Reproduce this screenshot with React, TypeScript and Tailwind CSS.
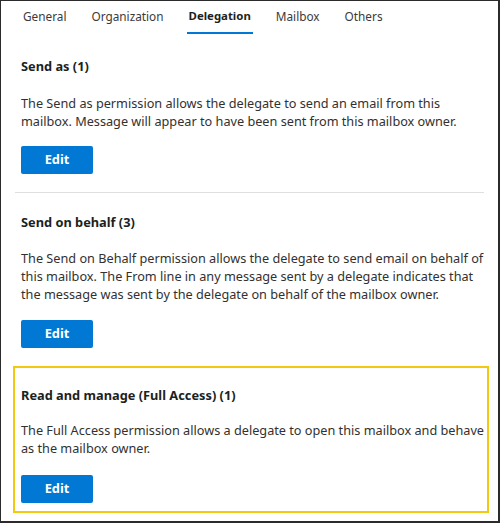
const tabs = ['General', 'Organization', 'Delegation', 'Mailbox', 'Others'];

function EditButton({ className = 'mt-[16px]' }: { className?: string }) {
  return (
    <button
      className={`${className} flex h-[28px] w-[72px] items-center justify-center rounded-[2px] bg-[#0078d4] text-[12.8px] font-bold text-white`}
    >
      Edit
    </button>
  );
}

export default function App() {
  return (
    <div
      className="h-[523px] w-[500px] overflow-hidden border-t border-l border-r-2 border-b-2 border-[#2b2b2b] bg-white text-[#323130]"
      style={{ fontFamily: '"Noto Sans", "Open Sans", sans-serif' }}
    >
      {/* Tabs */}
      <div className="flex h-[33px] gap-[21px] pl-[20px]">
        {tabs.map((t) => (
          <div
            key={t}
            className={`px-[2px] pt-[5px] leading-[20px] ${
              t === 'Delegation'
                ? 'border-b-2 border-[#0078d4] text-[11.4px] font-bold text-[#201f1e]'
                : 'text-[11.8px] text-[#3b3a39]'
            }`}
          >
            {t}
          </div>
        ))}
      </div>

      {/* Send as */}
      <section className="pr-[10px] pl-[20px] pt-[22px]">
        <h2 className="text-[12.8px] font-bold leading-[20px] text-[#201f1e]">Send as (1)</h2>
        <p className="mt-[18px] text-[12.7px] leading-[18px]">
          The Send as permission allows the delegate to send an email from this mailbox. Message will appear to have been sent from this mailbox owner.
        </p>
        <EditButton />
      </section>

      <div className="mx-[14px] mt-[18px] h-px bg-[#e1dfdd]" />

      {/* Send on behalf */}
      <section className="pr-[10px] pl-[20px] pt-[19px]">
        <h2 className="text-[12.8px] font-bold leading-[20px] text-[#201f1e]">Send on behalf (3)</h2>
        <p className="mt-[17px] text-[12.7px] leading-[18px]">
          The Send on Behalf permission allows the delegate to send email on behalf of this mailbox. The From line in any message sent by a delegate indicates that the message was sent by the delegate on behalf of the mailbox owner.
        </p>
        <EditButton className="mt-[17px]" />
      </section>

      {/* Full access */}
      <section className="ml-[12px] mt-[18px] w-[476px] border-2 border-[#f2c811] pt-[17px] pb-[8px] pl-[6px]">
        <h2 className="text-[12.8px] font-bold leading-[20px] text-[#201f1e]">Read and manage (Full Access) (1)</h2>
        <p className="mt-[16px] text-[12.7px] leading-[18px]">
          The Full Access permission allows a delegate to open this mailbox and behave as the mailbox owner.
        </p>
        <EditButton className="mt-[18px]" />
      </section>
    </div>
  );
}
